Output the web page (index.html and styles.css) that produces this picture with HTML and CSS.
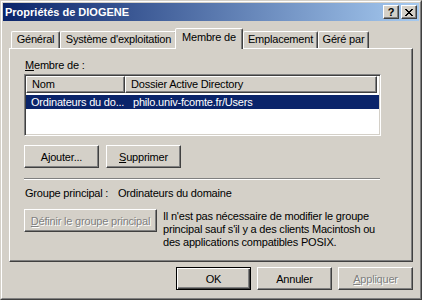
FILE: index.html
```html
<!DOCTYPE html>
<html lang="fr">
<head>
    <meta charset="UTF-8">
    <meta name="viewport" content="width=device-width, initial-scale=1.0">
    <title>Propriétés de DIOGENE</title>
    <link rel="stylesheet" href="styles.css">
</head>
<body>
    <div class="window">
        <div class="frame">
            <div class="titlebar">
                <span class="title">Propriétés de DIOGENE</span>
                <div class="caption-buttons">
                    <button class="caption-btn">?</button>
                    <button class="caption-btn">
                        <svg width="8" height="7" viewBox="0 0 8 7" shape-rendering="crispEdges">
                            <rect x="0" y="0" width="2" height="1"/><rect x="6" y="0" width="2" height="1"/>
                            <rect x="1" y="1" width="2" height="1"/><rect x="5" y="1" width="2" height="1"/>
                            <rect x="2" y="2" width="4" height="1"/>
                            <rect x="3" y="3" width="2" height="1"/>
                            <rect x="2" y="4" width="4" height="1"/>
                            <rect x="1" y="5" width="2" height="1"/><rect x="5" y="5" width="2" height="1"/>
                            <rect x="0" y="6" width="2" height="1"/><rect x="6" y="6" width="2" height="1"/>
                        </svg>
                    </button>
                </div>
            </div>

            <div class="dialog">
                <div class="tabs">
                    <div class="tab tab-general">Général</div>
                    <div class="tab tab-system">Système d'exploitation</div>
                    <div class="tab tab-member active">Membre de</div>
                    <div class="tab tab-location">Emplacement</div>
                    <div class="tab tab-managed">Géré par</div>
                </div>

                <div class="panel">
                    <div class="label"><u>M</u>embre de :</div>
                    <div class="listview">
                        <div class="lv-header">
                            <div class="lv-col col-name">Nom</div>
                            <div class="lv-col col-path">Dossier Active Directory</div>
                        </div>
                        <div class="lv-row selected">
                            <div class="lv-cell col-name">Ordinateurs du do...</div>
                            <div class="lv-cell col-path">philo.univ-fcomte.fr/Users</div>
                        </div>
                    </div>

                    <div class="button-row">
                        <button class="btn">A<u>j</u>outer...</button>
                        <button class="btn"><u>S</u>upprimer</button>
                    </div>

                    <div class="separator"></div>

                    <div class="group-row">
                        <span class="group-label">Groupe principal :</span>
                        <span>Ordinateurs du domaine</span>
                    </div>

                    <div class="primary-row">
                        <button class="btn btn-wide" disabled><u>D</u>éfinir le groupe principal</button>
                        <p class="note">Il n'est pas nécessaire de modifier le groupe<br>principal sauf s'il y a des clients Macintosh ou<br>des applications compatibles POSIX.</p>
                    </div>
                </div>

                <div class="actions">
                    <button class="btn default">OK</button>
                    <button class="btn">Annuler</button>
                    <button class="btn" disabled><u>A</u>ppliquer</button>
                </div>
            </div>
        </div>
    </div>
</body>
</html>
```

FILE: styles.css
```css
body {
    margin: 0;
    background-color: #d4d0c8;
    font-family: "Liberation Sans", Arial, sans-serif;
    font-size: 11px;
    letter-spacing: -0.2px;
    color: #000;
}
.window {
    width: 422px;
    height: 300px;
    box-sizing: border-box;
    border: 1px solid;
    border-color: #d4d0c8 #404040 #404040 #d4d0c8;
    background-color: #d4d0c8;
}
.frame {
    height: 100%;
    box-sizing: border-box;
    border: 1px solid;
    border-color: #fff #808080 #808080 #fff;
    padding: 1px;
}
.titlebar {
    height: 18px;
    display: flex;
    align-items: center;
    justify-content: space-between;
    padding: 0 2px;
    background: linear-gradient(to right, #0a246a, #a6caf0);
}
.title {
    color: #fff;
    font-weight: bold;
    letter-spacing: 0;
}
.caption-buttons {
    display: flex;
    gap: 2px;
}
.caption-btn {
    width: 16px;
    height: 14px;
    box-sizing: border-box;
    padding: 0;
    display: flex;
    align-items: center;
    justify-content: center;
    background-color: #d4d0c8;
    border: 1px solid;
    border-color: #fff #404040 #404040 #fff;
    box-shadow: inset -1px -1px #808080;
    font-family: "Liberation Sans", Arial, sans-serif;
    font-size: 11px;
    font-weight: bold;
    line-height: 1;
    color: #000;
}
.dialog {
    padding: 7px 6px 0;
}
.tabs {
    display: flex;
    align-items: flex-end;
    height: 20px;
    padding-left: 2px;
}
.tab {
    box-sizing: border-box;
    height: 17px;
    border: 1px solid;
    border-bottom: 0;
    border-color: #fff #404040 transparent #fff;
    border-radius: 2px 2px 0 0;
    box-shadow: inset -1px 0 #808080;
    text-align: center;
    line-height: 15px;
    white-space: nowrap;
}
.tab-general { width: 49px; }
.tab-system { width: 117px; }
.tab-member { width: 68px; }
.tab-location { width: 75px; }
.tab-managed { width: 51px; }
.tab.active {
    position: relative;
    z-index: 1;
    height: 21px;
    margin: 0 0 -1px -2px;
    background-color: #d4d0c8;
    line-height: 17px;
}
.panel {
    height: 214px;
    box-sizing: border-box;
    border: 1px solid;
    border-color: #fff #404040 #404040 #fff;
    box-shadow: inset -1px -1px #808080;
    padding: 10px 14px 0;
}
.label {
    line-height: 13px;
    padding-left: 1px;
}
.listview {
    margin-top: 2px;
    width: 357px;
    height: 62px;
    box-sizing: border-box;
    border: 1px solid;
    border-color: #808080 #fff #fff #808080;
    box-shadow: inset 1px 1px #404040, inset -1px -1px #d4d0c8;
    background-color: #fff;
    padding: 1px;
}
.lv-header {
    display: flex;
    height: 17px;
}
.lv-col {
    box-sizing: border-box;
    height: 17px;
    border: 1px solid;
    border-color: #fff #404040 #404040 #fff;
    box-shadow: inset -1px -1px #808080;
    background-color: #d4d0c8;
    padding-left: 5px;
    line-height: 14px;
    white-space: nowrap;
}
.lv-row {
    display: flex;
    margin-top: 2px;
    height: 14px;
    line-height: 14px;
}
.lv-row.selected {
    background-color: #0a246a;
    color: #fff;
}
.col-name { width: 99px; }
.col-path { width: 252px; }
.lv-cell {
    box-sizing: border-box;
    white-space: nowrap;
}
.lv-cell.col-name { padding-left: 5px; }
.lv-cell.col-path { padding-left: 8px; }
.btn {
    width: 75px;
    height: 23px;
    box-sizing: border-box;
    padding: 0;
    background-color: #d4d0c8;
    border: 1px solid;
    border-color: #fff #404040 #404040 #fff;
    box-shadow: inset -1px -1px #808080;
    font-family: inherit;
    font-size: 11px;
    letter-spacing: -0.2px;
    color: #000;
}
.btn:disabled {
    color: #808080;
    text-shadow: 1px 1px 0 #fff;
}
.btn.default {
    border-color: #000;
    box-shadow: inset 1px 1px #fff, inset -1px -1px #404040, inset -2px -2px #808080;
}
.btn-wide {
    width: 133px;
    flex-shrink: 0;
}
.button-row {
    display: flex;
    gap: 7px;
    margin-top: 9px;
}
.separator {
    margin-top: 10px;
    width: 356px;
    border-top: 1px solid #808080;
    border-bottom: 1px solid #fff;
}
.group-row {
    display: flex;
    margin-top: 7px;
    line-height: 13px;
    padding-left: 1px;
}
.group-label {
    width: 93px;
}
.primary-row {
    display: flex;
    gap: 6px;
    margin-top: 9px;
}
.note {
    margin: 1px 0 0;
    line-height: 13px;
    white-space: nowrap;
}
.actions {
    display: flex;
    justify-content: flex-end;
    gap: 6px;
    margin-top: 5px;
}
```
